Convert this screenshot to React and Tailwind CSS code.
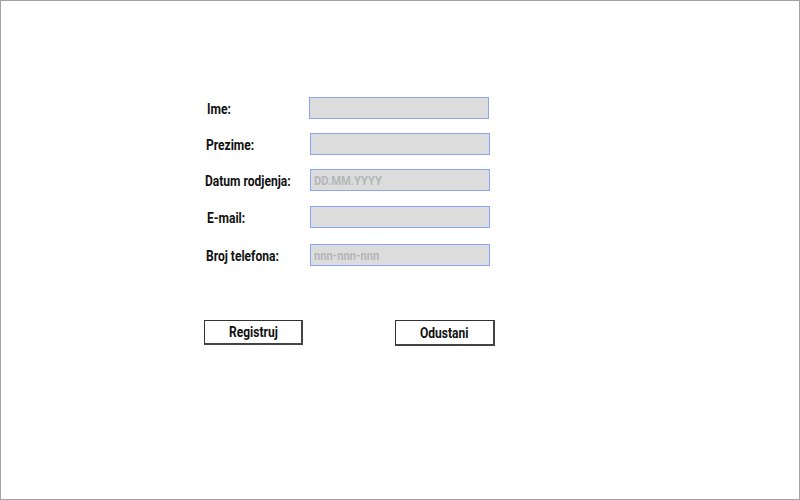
export default function App() {
  const font = { fontFamily: 'Roboto, "Liberation Sans", sans-serif' };
  const rows = [
    { label: "Ime:", mt: "mt-[96px]", lw: "w-[105px]", lx: "pl-[3px]", ph: "" },
    { label: "Prezime:", mt: "mt-[14px]", lw: "w-[106px]", lx: "pl-[2px]", ph: "" },
    { label: "Datum rodjenja:", mt: "mt-[14px]", lw: "w-[106px]", lx: "pl-[1px]", ph: "DD.MM.YYYY" },
    { label: "E-mail:", mt: "mt-[15px]", lw: "w-[106px]", lx: "pl-[3px]", ph: "" },
    { label: "Broj telefona:", mt: "mt-[16px]", lw: "w-[106px]", lx: "pl-[2px]", ph: "nnn-nnn-nnn" },
  ];
  return (
    <div className="w-[800px] h-[500px] bg-white border border-[#a3a3a3] box-border overflow-hidden" style={font}>
      <div className="pl-[203px] flex flex-col">
        {rows.map((r) => (
          <div key={r.label} className={`${r.mt} flex items-center h-[22px]`}>
            <div className={`${r.lw} ${r.lx} pt-[2px] shrink-0 whitespace-nowrap text-[14px] font-bold text-[#111] leading-none`}>
              <span className="inline-block scale-x-[0.86] origin-left">{r.label}</span>
            </div>
            <div className="w-[180px] h-[22px] bg-[#dcdcdc] border border-[#8aa6f5] flex items-center pl-[3px] text-[13px] font-bold text-[#b3b7b9] leading-none whitespace-nowrap">
              <span className="inline-block scale-x-[0.86] origin-left">{r.ph}</span>
            </div>
          </div>
        ))}
        <div className="mt-[54px] flex items-start">
          <div className="w-[99px] h-[25px] border border-[#333] border-r-2 border-b-2 border-r-[#444] border-b-[#444] flex items-center justify-center text-[14px] font-bold text-[#111] leading-none">
            <span className="inline-block scale-x-[0.86]">Registruj</span>
          </div>
          <div className="ml-[92px] w-[100px] h-[26px] border border-[#333] border-r-2 border-b-2 border-r-[#444] border-b-[#444] flex items-center justify-center text-[14px] font-bold text-[#111] leading-none">
            <span className="inline-block scale-x-[0.86]">Odustani</span>
          </div>
        </div>
      </div>
    </div>
  );
}
